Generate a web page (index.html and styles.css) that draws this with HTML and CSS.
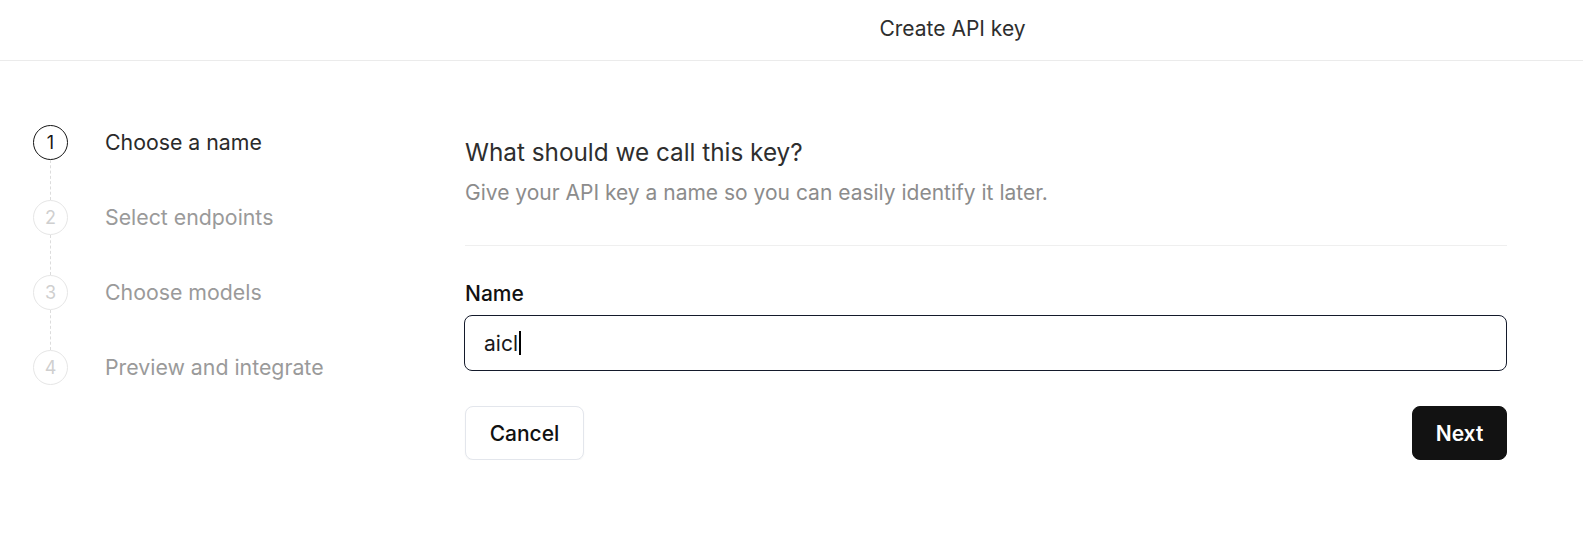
FILE: index.html
```html
<!DOCTYPE html>
<html lang="en">
<head>
<meta charset="utf-8">
<title>Create API key</title>
<link rel="stylesheet" href="styles.css">
</head>
<body>
<header class="topbar">
  <div class="topbar-spacer"></div>
  <h1 class="topbar-title">Create API key</h1>
</header>
<main class="layout">
  <nav class="steps">
    <div class="step active">
      <span class="step-num">1</span>
      <span class="step-label">Choose a name</span>
    </div>
    <div class="step-line"></div>
    <div class="step">
      <span class="step-num">2</span>
      <span class="step-label">Select endpoints</span>
    </div>
    <div class="step-line"></div>
    <div class="step">
      <span class="step-num">3</span>
      <span class="step-label">Choose models</span>
    </div>
    <div class="step-line"></div>
    <div class="step">
      <span class="step-num">4</span>
      <span class="step-label">Preview and integrate</span>
    </div>
  </nav>
  <section class="panel">
    <h2 class="panel-title">What should we call this key?</h2>
    <p class="panel-sub">Give your API key a name so you can easily identify it later.</p>
    <hr class="divider">
    <label class="field-label">Name</label>
    <div class="field-input" role="textbox">aicl<span class="caret"></span></div>
    <div class="actions">
      <button class="btn btn-outline">Cancel</button>
      <button class="btn btn-dark">Next</button>
    </div>
  </section>
</main>
</body>
</html>
```
FILE: styles.css
```css
* { box-sizing: border-box; }
html, body { margin: 0; padding: 0; background: #fff; }
body {
  font-family: Inter, "Noto Sans", "Liberation Sans", sans-serif;
  color: #111;
}
.topbar {
  height: 61px;
  display: flex;
  align-items: center;
  border-bottom: 1px solid #ebebeb;
}
.topbar-spacer { width: 300px; flex: none; }
.topbar-title {
  flex: 1;
  margin: 0 0 4px 22px;
  text-align: center;
  font-size: 21px;
  font-weight: 400;
  color: #2e2e2e;
}
.layout {
  display: flex;
  padding: 64px 0 0 33px;
}
.steps {
  width: 432px;
  flex: none;
  display: flex;
  flex-direction: column;
}
.step {
  display: flex;
  align-items: center;
  gap: 37px;
  height: 35px;
}
.step-num {
  width: 35px;
  height: 35px;
  flex: none;
  border-radius: 50%;
  border: 1px solid #e6e6e6;
  color: #cfcfcf;
  display: flex;
  align-items: center;
  justify-content: center;
  font-size: 18px;
}
.step-label {
  font-size: 21.3px;
  color: #9a9a9a;
  margin-top: -1px;
}
.step.active .step-num { border-color: #161616; color: #161616; }
.step.active .step-label { color: #2a2a2a; }
.step-line {
  width: 0;
  height: 40px;
  margin-left: 17px;
  border-left: 1px dashed #dcdcdc;
  background-clip: content-box;
  padding: 11px 0;
}
.panel {
  width: 1042px;
  flex: none;
  padding-top: 12px;
}
.panel-title {
  margin: 0;
  font-size: 24.3px;
  line-height: 30px;
  font-weight: 400;
  color: #2e2e2e;
}
.panel-sub {
  margin: 12px 0 0 0;
  font-size: 21px;
  line-height: 28px;
  color: #8c8c8c;
}
.divider {
  margin: 38px 0 0 0;
  border: none;
  border-top: 1px solid #efefef;
}
.field-label {
  display: block;
  margin-top: 36px;
  font-size: 21px;
  line-height: 24px;
  font-weight: 500;
  color: #111;
}
.field-input {
  margin-top: 9px;
  margin-left: -1px;
  height: 56px;
  border: 1.5px solid #141a2b;
  border-radius: 8px;
  padding: 0 19px;
  display: flex;
  align-items: center;
  font-size: 21px;
  color: #1a1a1a;
}
.caret {
  display: inline-block;
  width: 2px;
  height: 24px;
  background: #000;
  margin-left: 1px;
}
.actions {
  margin-top: 35px;
  display: flex;
  justify-content: space-between;
}
.btn {
  height: 54px;
  border-radius: 8px;
  font-family: inherit;
  font-size: 21px;
  font-weight: 450;
  padding: 0;
  cursor: pointer;
}
.btn-outline {
  background: #fff;
  border: 1px solid #e3e6ec;
  color: #111;
  width: 119px;
  box-shadow: 0 1px 2px rgba(0,0,0,0.04);
}
.btn-dark {
  background: #121212;
  border: 1px solid #121212;
  color: #fff;
  font-weight: 600;
  width: 95px;
}
```
